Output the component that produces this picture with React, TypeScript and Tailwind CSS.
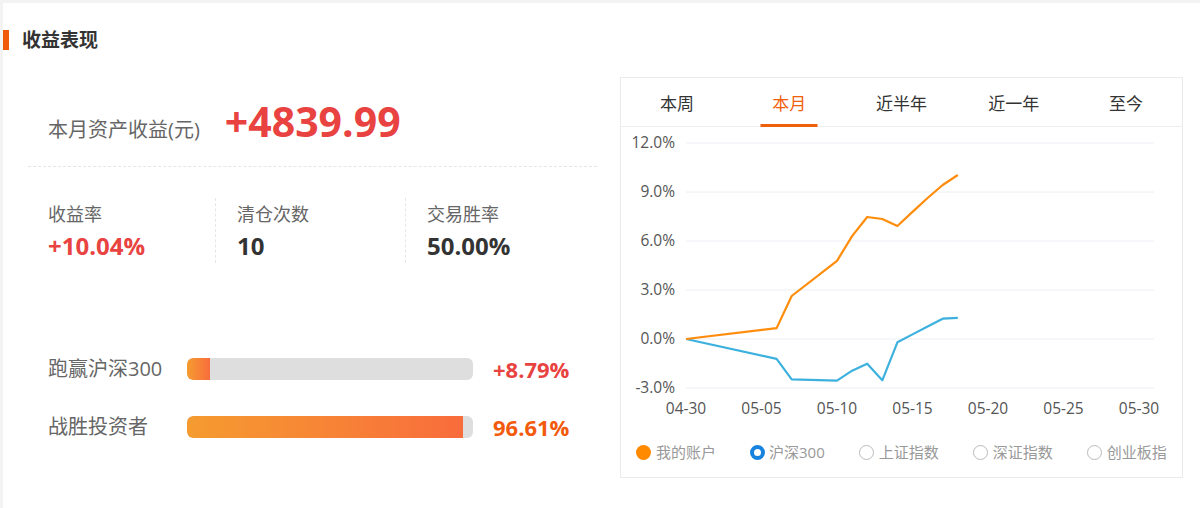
import React from "react";

const days = [0, 6, 7, 10, 11, 12, 13, 14, 15, 16, 17, 18];
const mine = [0, 0.67, 2.63, 4.78, 6.3, 7.47, 7.35, 6.92, 7.78, 8.63, 9.43, 10.04];
const hs300 = [0, -1.22, -2.47, -2.55, -1.94, -1.51, -2.53, -0.2, 0.28, 0.76, 1.24, 1.29];

const xOf = (d: number) => 65 + d * 15.1;
const yOf = (p: number) => 212 - (p * 49) / 3;

const pts = (vals: number[]) => vals.map((v, i) => `${xOf(days[i]).toFixed(1)},${yOf(v).toFixed(1)}`).join(" ");

const yTicks = [12, 9, 6, 3, 0, -3];
const xTicks = ["04-30", "05-05", "05-10", "05-15", "05-20", "05-25", "05-30"];

function Chart() {
  return (
    <svg width="561" height="293" viewBox="0 0 561 293" className="block">
      {yTicks.map((t) => (
        <g key={t}>
          <line x1="65" x2="533" y1={yOf(t)} y2={yOf(t)} stroke="#eceef3" strokeWidth="1" />
          <text
            x="54"
            y={yOf(t) + 5}
            textAnchor="end"
            fontSize="15.5"
            fill="#555"
            fontFamily="'Open Sans','Noto Sans CJK SC',sans-serif"
          >
            {t.toFixed(1)}%
          </text>
        </g>
      ))}
      {xTicks.map((t, i) => (
        <text
          key={t}
          x={xOf(i * 5)}
          y="286.5"
          textAnchor="middle"
          fontSize="15.5"
          fill="#555"
          fontFamily="'Open Sans','Noto Sans CJK SC',sans-serif"
        >
          {t}
        </text>
      ))}
      <polyline points={pts(hs300)} fill="none" stroke="#3db1de" strokeWidth="2.2" strokeLinejoin="round" />
      <polyline points={pts(mine)} fill="none" stroke="#ff8c0a" strokeWidth="2.2" strokeLinejoin="round" />
    </svg>
  );
}

const tabs = ["本周", "本月", "近半年", "近一年", "至今"];

function Panel() {
  return (
    <div className="ml-[23px] h-[401px] w-[563px] border border-[#ebebeb]">
      <div className="flex h-[49px] border-b border-[#ededed]">
        {tabs.map((t, i) => (
          <div key={t} className="relative flex flex-1 items-center justify-center pt-[3px]">
            <span className={i === 1 ? "text-[17px] text-[#f0600a]" : "text-[17px] text-[#333]"}>{t}</span>
            {i === 1 && <div className="absolute bottom-[-1px] left-1/2 h-[3px] w-[57px] -translate-x-1/2 bg-[#f0600a]" />}
          </div>
        ))}
      </div>
      <Chart />
      <div className="mt-[24px] flex h-[16px] items-center gap-[34px] pl-[15px] text-[15px] text-[#999]">
        <div className="flex items-center gap-[5px]">
          <span className="h-[15px] w-[15px] rounded-full bg-[#ff8a00]" />
          <span className="leading-[16px]">我的账户</span>
        </div>
        <div className="flex items-center gap-[4px]">
          <span className="h-[15px] w-[15px] rounded-full border-[4px] border-[#1683df] bg-white" />
          <span className="leading-[16px]">沪深300</span>
        </div>
        {["上证指数", "深证指数", "创业板指"].map((t) => (
          <div key={t} className="flex items-center gap-[5px]">
            <span className="h-[15px] w-[15px] rounded-full border-[1.5px] border-[#bbbbbb] bg-white" />
            <span className="leading-[16px]">{t}</span>
          </div>
        ))}
      </div>
    </div>
  );
}

function Bar({ label, pct, value, color }: { label: string; pct: number; value: string; color: string }) {
  return (
    <div className="flex h-[22px] items-center pl-[20px]">
      <div className="w-[139px] text-[20px] leading-[22px] text-[#666]">{label}</div>
      <div className="h-[22px] w-[286px] overflow-hidden rounded-[6px] bg-[#dedede]">
        <div
          className="h-full rounded-l-[6px] bg-gradient-to-r from-[#f59b2f] to-[#f86c3b]"
          style={{ width: `${pct}%` }}
        />
      </div>
      <div className={`ml-[20px] text-[22px] font-bold leading-[22px] ${color}`}>{value}</div>
    </div>
  );
}

function Left() {
  return (
    <div className="ml-[25px] w-[569px]">
      <div className="h-[90px] border-b border-dashed border-[#e6e6e6] pt-[24px]">
        <div className="flex items-baseline pl-[20px]">
          <span className="text-[20px] leading-[40px] text-[#666]">本月资产收益(元)</span>
          <span className="ml-[25px] text-[41px] font-bold leading-[40px] text-[#e84341]">+4839.99</span>
        </div>
      </div>
      <div className="mt-[31px] grid h-[65px] grid-cols-[187px_190px_190px]">
        {[
          { l: "收益率", v: "+10.04%", c: "text-[#e84341]" },
          { l: "清仓次数", v: "10", c: "text-[#333]" },
          { l: "交易胜率", v: "50.00%", c: "text-[#333]" },
        ].map((s, i) => (
          <div key={s.l} className={i > 0 ? "border-l border-dashed border-[#e6e6e6] pl-[21px] pt-[4px]" : "pl-[20px] pt-[4px]"}>
            <div className="text-[18px] leading-[24px] text-[#666]">{s.l}</div>
            <div className={`mt-[4px] text-[24px] font-bold leading-[32px] ${s.c}`}>{s.v}</div>
          </div>
        ))}
      </div>
      <div className="mt-[95px]">
        <Bar label="跑赢沪深300" pct={8.2} value="+8.79%" color="text-[#e84341]" />
      </div>
      <div className="mt-[36px]">
        <Bar label="战胜投资者" pct={96.61} value="96.61%" color="text-[#f25a0c]" />
      </div>
    </div>
  );
}

export default function App() {
  return (
    <div className="h-[508px] w-[1200px] overflow-hidden bg-[#f3f3f3] pl-[3px] pt-[3px] [font-family:'Open_Sans','Noto_Sans_CJK_SC',sans-serif]">
      <div className="h-full bg-white pt-[27px]">
        <div className="flex h-[20px] items-center">
          <div className="h-[20px] w-[6px] bg-[#f05a0a]" />
          <h2 className="ml-[13px] text-[19px] font-bold leading-[20px] text-[#333]">收益表现</h2>
        </div>
        <div className="mt-[27px] flex items-start">
          <Left />
          <Panel />
        </div>
      </div>
    </div>
  );
}
